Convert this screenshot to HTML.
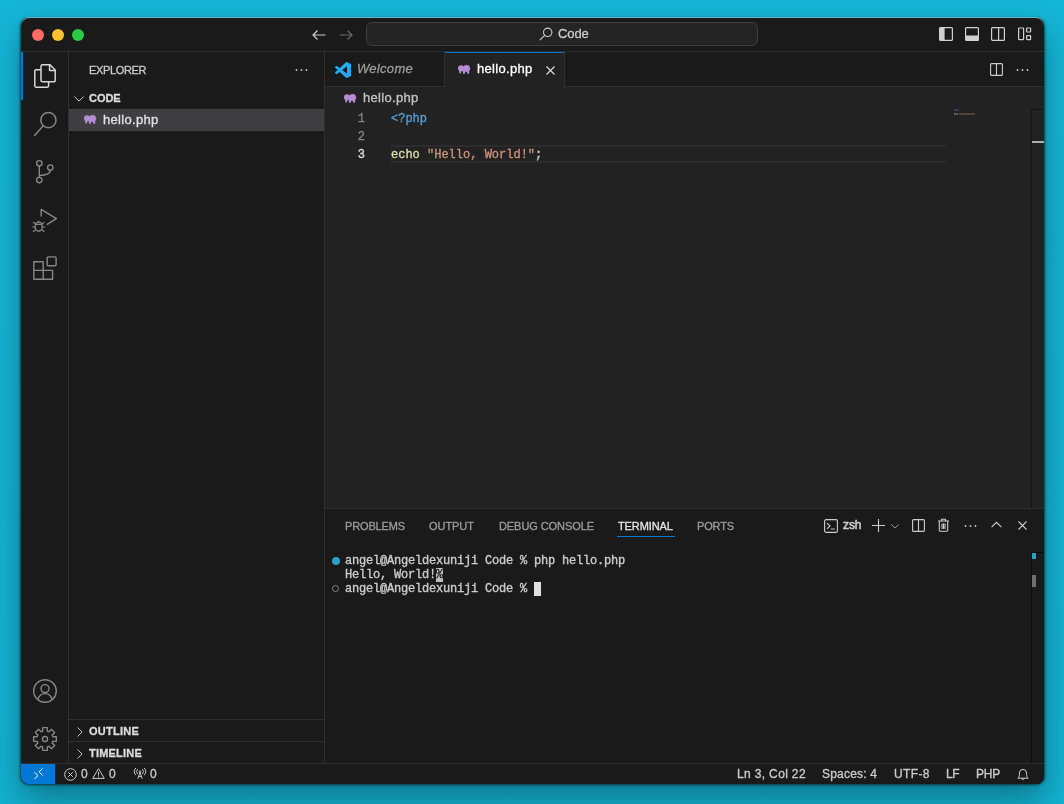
<!DOCTYPE html>
<html>
<head>
<meta charset="utf-8">
<title>hello.php — Code</title>
<style>
*{box-sizing:border-box;margin:0;padding:0}
html,body{width:1064px;height:804px;overflow:hidden}
body{font-family:"Liberation Sans",sans-serif;font-size:13px;color:#ccc;
 background:linear-gradient(180deg,#15b5d6 0%,#14b3d3 60%,#13b1d0 100%);position:relative}
.abs{position:absolute}
.t{position:absolute;white-space:pre;line-height:16px;-webkit-text-stroke:0.3px}
#win{position:absolute;left:21px;top:18px;width:1023px;height:766px;background:#1a1a1a;border-radius:8px;
 box-shadow:0 0.5px 2.5px 0.5px rgba(0,0,0,.6),0 15px 32px 0 rgba(0,0,0,.33)}
#clip{position:absolute;left:0;top:0;width:1023px;height:766px;border-radius:8px;overflow:hidden;will-change:transform}
#hl{position:absolute;left:0;top:-1px;right:0;bottom:0;border-radius:9px;box-shadow:inset 0 1px 0 rgba(255,255,255,.38);pointer-events:none}
/* title bar */
#title{position:absolute;left:0;top:0;width:1023px;height:34px;background:#1a1a1a;border-bottom:1px solid #2f2f2f}
.tl{position:absolute;top:11px;width:12px;height:12px;border-radius:50%}
#search{position:absolute;left:345px;top:4px;width:392px;height:24px;border:1px solid #3f3c3c;border-radius:6px;background:#242424}
/* activity bar */
#act{position:absolute;left:0;top:34px;width:48px;height:711px;background:#1a1a1a;border-right:1px solid #2f2f2f}
#actsel{position:absolute;left:0;top:0;width:2px;height:48px;background:#0078d4}
/* sidebar */
#side{position:absolute;left:48px;top:34px;width:256px;height:711px;background:#1a1a1a;border-right:1px solid #2f2f2f}
.sb{font-weight:bold;font-size:11px;color:#dcdcdc}
/* editor */
#ed{position:absolute;left:304px;top:34px;width:719px;height:456px;background:#222222}
#tabs{position:absolute;left:0;top:0;width:719px;height:35px;background:#1a1a1a;border-bottom:1px solid #2f2f2f}
.tab{position:absolute;top:0;height:35px;border-right:1px solid #2f2f2f}
.mono{font-family:"Liberation Mono",monospace;font-size:12px;white-space:pre;line-height:18px;-webkit-text-stroke:0.35px}
.ln{position:absolute;left:0;width:40px;text-align:right;color:#7f8287;transform:translateY(0.7px)}
.cl{position:absolute;left:66px;transform:translateY(0.6px)}
/* panel */
#panel{position:absolute;left:304px;top:490px;width:719px;height:255px;background:#1a1a1a;border-top:1px solid #2f2f2f}
.pt{font-size:11px;color:#9d9d9d;top:9px}
.term{position:absolute;left:20px;color:#ccc;letter-spacing:-0.2px;line-height:14px}
/* status */
#status{position:absolute;left:0;top:745px;width:1023px;height:21px;background:#1a1a1a;border-top:1px solid #2f2f2f;font-size:12px;color:#ccc}
#remote{position:absolute;left:0;top:0;width:34px;height:20px;background:#0078d4}
.st{top:2px;font-size:12px}
svg{position:absolute;overflow:visible}
</style>
</head>
<body>
<div id="win">
<div id="clip">
 <div id="title">
  <div class="tl" style="left:11px;background:#ff6a62"></div>
  <div class="tl" style="left:31px;background:#fdc030"></div>
  <div class="tl" style="left:51px;background:#2aca44"></div>
  <!-- nav arrows -->
  <svg style="left:291px;top:10px" width="14" height="14" viewBox="0 0 14 14" fill="none" stroke="#ccc" stroke-width="1.2"><path d="M1 7h12.500M5.500 2.500 1 7l4.500 4.500"/></svg>
  <svg style="left:318px;top:10px" width="14" height="14" viewBox="0 0 14 14" fill="none" stroke="#6a6a6a" stroke-width="1.2"><path d="M0.500 7h12.500M8.500 2.500 13 7l-4.500 4.500"/></svg>
  <div id="search">
   <svg style="left:172px;top:4px" width="14" height="14" viewBox="0 0 14 14" fill="none" stroke="#ccc" stroke-width="1.1"><circle cx="8.700" cy="5.300" r="4.200"/><path d="M5.700 8.300 0.800 13.200"/></svg>
   <span class="t" style="left:191px;top:3px;font-size:13px;color:#ccc;letter-spacing:-0.1px">Code</span>
  </div>
  <!-- layout icons -->
  <svg style="left:918px;top:9px" width="14" height="14" viewBox="0 0 14 14" fill="none" stroke="#d0d0d0" stroke-width="1.200"><rect x="0.600" y="0.600" width="12.800" height="12.800" rx="1"/><rect x="0.600" y="0.600" width="5" height="12.800" fill="#d0d0d0" stroke="none"/></svg>
  <svg style="left:944px;top:9px" width="14" height="14" viewBox="0 0 14 14" fill="none" stroke="#d0d0d0" stroke-width="1.200"><rect x="0.600" y="0.600" width="12.800" height="12.800" rx="1"/><rect x="0.600" y="8.500" width="12.800" height="5" fill="#d0d0d0" stroke="none"/></svg>
  <svg style="left:970px;top:9px" width="14" height="14" viewBox="0 0 14 14" fill="none" stroke="#d0d0d0" stroke-width="1.200"><rect x="0.600" y="0.600" width="12.800" height="12.800" rx="1"/><path d="M7.600 0.600v12.800"/></svg>
  <svg style="left:997px;top:9px" width="14" height="14" viewBox="0 0 14 14" fill="none" stroke="#d0d0d0" stroke-width="1.200"><rect x="0.600" y="1" width="5" height="11.600" rx="0.500"/><rect x="8.600" y="1" width="4" height="4" rx="0.500"/><rect x="8.600" y="8.600" width="4" height="4" rx="0.500"/></svg>
 </div>

 <div id="act">
  <div id="actsel"></div>
  <!-- files -->
  <svg style="left:13px;top:12px" width="22" height="24" viewBox="0 0 22 24" fill="none" stroke="#d7d7d7" stroke-width="1.500" stroke-linejoin="round"><path d="M7 5.700V2.200A1.400 1.400 0 0 1 8.400 0.800H16L21.200 6V16.400A1.400 1.400 0 0 1 19.800 17.800H8.400A1.400 1.400 0 0 1 7 16.400V5.700H2.200A1.400 1.400 0 0 0 0.800 7.100V21.800A1.400 1.400 0 0 0 2.200 23.200H13.200A1.400 1.400 0 0 0 14.600 21.800V17.800"/><path d="M15.600 0.800V6.400H21.200"/></svg>
  <!-- search -->
  <svg style="left:12px;top:58px" width="26" height="28" viewBox="0 0 26 28" fill="none" stroke="#868686" stroke-width="1.500"><circle cx="15.400" cy="10.200" r="7.600"/><path d="M10.200 15.800 1.600 25.400" stroke-linecap="round"/></svg>
  <!-- scm -->
  <svg style="left:12px;top:106px" width="24" height="28" viewBox="0 0 24 28" fill="none" stroke="#868686" stroke-width="1.400"><circle cx="6.300" cy="5.300" r="2.700"/><circle cx="6.300" cy="22.100" r="2.700"/><circle cx="17.300" cy="9.600" r="2.700"/><path d="M6.300 8v11.400M17.300 12.300c0 4-4 5-11 5.200"/></svg>
  <!-- debug -->
  <svg style="left:10px;top:154px" width="28" height="28" viewBox="0 0 28 28" fill="none" stroke="#868686" stroke-width="1.400" stroke-linejoin="round"><path d="M10.200 10.500V3.400l15.200 9.200-9.600 6"/><ellipse cx="7.700" cy="20.600" rx="3.600" ry="4.600"/><path d="M4.300 18.400h6.800M7.700 16v-1.200M2 16.200l2.400 1.600M13.400 16.200 11 17.800M1.200 21h2.900M11.300 21h2.900M2 25.800l2.600-2M13.400 25.800l-2.600-2" stroke-width="1.200"/></svg>
  <!-- extensions -->
  <svg style="left:12px;top:204px" width="24" height="24" viewBox="0 0 24 24" fill="none" stroke="#868686" stroke-width="1.400" stroke-linejoin="round"><path d="M0.800 5.700h9.400v17.600H0.800zM10.200 14.400h9.400v8.900h-9.400M0.800 14.400h9.400"/><rect x="14.200" y="0.900" width="8.900" height="8.900" rx="1"/></svg>
  <!-- account -->
  <svg style="left:12px;top:626px" width="24" height="26" viewBox="0 0 24 26" fill="none" stroke="#868686" stroke-width="1.400"><circle cx="12" cy="13" r="11.300"/><circle cx="12" cy="10.600" r="4"/><path d="M4.800 21.800c1-4.400 4.200-6.200 7.200-6.200s6.200 1.800 7.200 6.200"/></svg>
  <!-- gear -->
  <svg style="left:11px;top:674px" width="26" height="26" viewBox="-13 -13 26 26" fill="none" stroke="#868686" stroke-width="1.400" stroke-linejoin="round"><circle r="2.500"/><path d="M-2.38 -8.27L-2.30 -11.37L2.30 -11.37L2.38 -8.27L2.21 -7.90L4.02 -7.15L4.16 -7.52L6.41 -9.67L9.67 -6.41L7.52 -4.16L7.15 -4.02L7.90 -2.21L8.27 -2.38L11.37 -2.30L11.37 2.30L8.27 2.38L7.90 2.21L7.15 4.02L7.52 4.16L9.67 6.41L6.41 9.67L4.16 7.52L4.02 7.15L2.21 7.90L2.38 8.27L2.30 11.37L-2.30 11.37L-2.38 8.27L-2.21 7.90L-4.02 7.15L-4.16 7.52L-6.41 9.67L-9.67 6.41L-7.52 4.16L-7.15 4.02L-7.90 2.21L-8.27 2.38L-11.37 2.30L-11.37 -2.30L-8.27 -2.38L-7.90 -2.21L-7.15 -4.02L-7.52 -4.16L-9.67 -6.41L-6.41 -9.67L-4.16 -7.52L-4.02 -7.15L-2.21 -7.90Z"/></svg>
 </div>

 <div id="side">
  <span class="t" style="left:20px;top:10px;font-size:11px;color:#ccc;letter-spacing:-0.35px">EXPLORER</span>
  <svg style="left:226px;top:16px" width="13" height="4" viewBox="0 0 13 4" fill="#ccc"><circle cx="1.500" cy="2" r="0.900"/><circle cx="6.500" cy="2" r="0.900"/><circle cx="11.500" cy="2" r="0.900"/></svg>
  <svg style="left:5px;top:43.500px" width="10" height="6" viewBox="0 0 10 6" fill="none" stroke="#c5c5c5" stroke-width="1"><path d="M0.400 0.500 5 5.100 9.600 0.500"/></svg>
  <span class="t sb" style="left:20px;top:38px;letter-spacing:-0.05px">CODE</span>
  <div class="abs" style="left:0;top:57px;width:255px;height:22px;background:#3e3e43"></div>
  <svg class="php" style="left:15px;top:63px" width="13" height="10" viewBox="0 0 13 10"><g fill="#b68bd2"><circle cx="3.100" cy="3.300" r="3.100"/><circle cx="8.600" cy="3.500" r="3.400"/><rect x="4.900" y="4" width="2.100" height="4.800" rx="0.500"/><rect x="9.100" y="4" width="2.100" height="4.800" rx="0.500"/><rect x="1.300" y="4.500" width="1.700" height="4" rx="0.700" fill="#a99ad8"/><path d="M11.700 3l1.100.5-1.100.6z"/></g></svg>
  <span class="t" style="left:34px;top:60px;font-size:13px;color:#e2e2e2;letter-spacing:0.3px">hello.php</span>
  <div class="abs" style="left:0;top:667px;width:255px;height:1px;background:#2f2f2f"></div>
  <svg style="left:7.500px;top:674.500px" width="6" height="10" viewBox="0 0 6 10" fill="none" stroke="#c5c5c5" stroke-width="1"><path d="M0.600 0.500 5.100 5 0.600 9.500"/></svg>
  <span class="t sb" style="left:20px;top:671px;letter-spacing:0.25px">OUTLINE</span>
  <div class="abs" style="left:0;top:689px;width:255px;height:1px;background:#2f2f2f"></div>
  <svg style="left:7.500px;top:696.500px" width="6" height="10" viewBox="0 0 6 10" fill="none" stroke="#c5c5c5" stroke-width="1"><path d="M0.600 0.500 5.100 5 0.600 9.500"/></svg>
  <span class="t sb" style="left:20px;top:693px;letter-spacing:0.2px">TIMELINE</span>
 </div>

 <div id="ed">
  <div id="tabs">
   <div class="tab" style="left:0;width:120px">
    <svg style="left:10px;top:10px" width="16" height="16" viewBox="0 0 100 100"><path fill="#23a9f2" fill-rule="evenodd" d="M70.900 99.300c1.600.6 3.400.6 4.900-.2l20.600-9.900c2.200-1 3.500-3.200 3.500-5.600V16.400c0-2.400-1.400-4.600-3.500-5.600L75.800.9c-2.100-1-4.500-.8-6.400.6-.3.200-.5.400-.7.700L29.400 38.100 12.200 25.100c-1.600-1.200-3.800-1.100-5.300.2L1.400 30.400c-1.800 1.700-1.800 4.500 0 6.100L16.300 50 1.400 63.500c-1.800 1.700-1.800 4.500 0 6.100l5.500 5c1.500 1.400 3.700 1.500 5.300.2l17.200-13 39.400 35.900c.6.600 1.300 1.100 2.100 1.400zM75 27.300 45.100 50 75 72.700V27.300z"/></svg>
    <span class="t" style="left:32px;top:9px;font-style:italic;color:#9d9d9d;letter-spacing:0.3px">Welcome</span>
   </div>
   <div class="tab" style="left:120px;width:120px;height:36px;background:#222222;border-top:1px solid #0078d4">
    <svg class="php" style="left:13px;top:12px" width="13" height="10" viewBox="0 0 13 10"><g fill="#b68bd2"><circle cx="3.100" cy="3.300" r="3.100"/><circle cx="8.600" cy="3.500" r="3.400"/><rect x="4.900" y="4" width="2.100" height="4.800" rx="0.500"/><rect x="9.100" y="4" width="2.100" height="4.800" rx="0.500"/><rect x="1.300" y="4.500" width="1.700" height="4" rx="0.700" fill="#a99ad8"/><path d="M11.700 3l1.100.5-1.100.6z"/></g></svg>
    <span class="t" style="left:32px;top:8px;color:#fff;letter-spacing:0.3px">hello.php</span>
    <svg style="left:101px;top:13px" width="9" height="9" viewBox="0 0 9 9" fill="none" stroke="#ddd" stroke-width="1.100"><path d="M0.500 0.500l8 8M8.500 0.500l-8 8"/></svg>
   </div>
   <svg style="left:665px;top:11px" width="13" height="13" viewBox="0 0 13 13" fill="none" stroke="#ccc" stroke-width="1.100"><rect x="0.600" y="0.600" width="11.800" height="11.800" rx="1"/><path d="M6.500 0.600v11.800"/></svg>
   <svg style="left:691px;top:16px" width="13" height="4" viewBox="0 0 13 4" fill="#ccc"><circle cx="1.500" cy="2" r="0.900"/><circle cx="6.500" cy="2" r="0.900"/><circle cx="11.500" cy="2" r="0.900"/></svg>
  </div>
  <svg class="php" style="left:19px;top:42px" width="13" height="10" viewBox="0 0 13 10"><g fill="#b68bd2"><circle cx="3.100" cy="3.300" r="3.100"/><circle cx="8.600" cy="3.500" r="3.400"/><rect x="4.900" y="4" width="2.100" height="4.800" rx="0.500"/><rect x="9.100" y="4" width="2.100" height="4.800" rx="0.500"/><rect x="1.300" y="4.500" width="1.700" height="4" rx="0.700" fill="#a99ad8"/><path d="M11.700 3l1.100.5-1.100.6z"/></g></svg>
  <span class="t" style="left:38px;top:38px;font-size:13px;color:#c4c4c4;letter-spacing:0.3px">hello.php</span>
  <div class="abs" style="left:66px;top:93px;width:555px;height:18px;border:2px solid #2c2c2c;border-right:none;border-left-width:1px"></div>
  <div class="mono ln" style="top:57px">1</div>
  <div class="mono ln" style="top:75px">2</div>
  <div class="mono ln" style="top:93px;color:#ddd">3</div>
  <div class="mono cl" style="top:57px;color:#569cd6">&lt;?php</div>
  <div class="mono cl" style="top:93px"><span style="color:#dcdcaa">echo</span> <span style="color:#ce9178">"Hello, World!"</span><span style="color:#ccc">;</span></div>
  <!-- minimap -->
  <div class="abs" style="left:629px;top:57px;width:5px;height:2px;background:#35587a;opacity:.6"></div>
  <div class="abs" style="left:629px;top:61px;width:4px;height:2px;background:#85856b;opacity:.6"></div>
  <div class="abs" style="left:634px;top:61px;width:16px;height:2px;background:#6f564a;opacity:.6"></div>
  <!-- scrollbar -->
  <div class="abs" style="left:706px;top:57px;width:1px;height:399px;background:#141414"></div>
  <div class="abs" style="left:706px;top:57px;width:13px;height:1px;background:#141414"></div>
  <div class="abs" style="left:707px;top:89px;width:12px;height:2px;background:#b0b0b0"></div>
 </div>

 <div id="panel">
  <span class="t pt" style="left:20px;letter-spacing:-0.15px">PROBLEMS</span>
  <span class="t pt" style="left:104px;letter-spacing:-0.05px">OUTPUT</span>
  <span class="t pt" style="left:174px;letter-spacing:-0.08px">DEBUG CONSOLE</span>
  <span class="t pt" style="left:293px;color:#e7e7e7;letter-spacing:-0.1px">TERMINAL</span>
  <div class="abs" style="left:292px;top:27px;width:58px;height:1px;background:#0078d4"></div>
  <span class="t pt" style="left:372px;letter-spacing:-0.15px">PORTS</span>
  <!-- panel actions -->
  <svg style="left:499px;top:9.500px" width="14" height="14" viewBox="0 0 14 14" fill="none" stroke="#ccc" stroke-width="1.100"><rect x="0.600" y="0.600" width="12.800" height="12.800" rx="1.500"/><path d="M3 4.200 6 7 3 9.800M6.800 10h4"/></svg>
  <span class="t" style="left:518px;top:8px;font-size:12px;color:#ccc;-webkit-text-stroke:0.55px;letter-spacing:-0.1px">zsh</span>
  <svg style="left:547px;top:10px" width="13" height="13" viewBox="0 0 13 13" fill="none" stroke="#ccc" stroke-width="1.100"><path d="M6.500 0v13M0 6.500h13"/></svg>
  <svg style="left:566px;top:15px" width="8" height="5" viewBox="0 0 8 5" fill="none" stroke="#9d9d9d" stroke-width="1"><path d="M0.400 0.500 4 4.100 7.600 0.500"/></svg>
  <svg style="left:587px;top:10px" width="13" height="13" viewBox="0 0 13 13" fill="none" stroke="#ccc" stroke-width="1.100"><rect x="0.600" y="0.600" width="11.800" height="11.800" rx="1"/><path d="M6.500 0.600v11.800"/></svg>
  <svg style="left:613px;top:9px" width="11" height="14" viewBox="0 0 11 14" fill="none" stroke="#ccc" stroke-width="1.100"><path d="M0 3h11M3.500 3V1.200h4V3M1.300 3.200V12a1.200 1.200 0 0 0 1.200 1.200h6A1.200 1.200 0 0 0 9.700 12V3.200M4 5.500v5.500M5.500 5.500v5.500M7 5.500v5.500"/></svg>
  <svg style="left:639px;top:15px" width="13" height="4" viewBox="0 0 13 4" fill="#ccc"><circle cx="1.500" cy="2" r="0.900"/><circle cx="6.500" cy="2" r="0.900"/><circle cx="11.500" cy="2" r="0.900"/></svg>
  <svg style="left:666px;top:12px" width="11" height="7" viewBox="0 0 11 7" fill="none" stroke="#ccc" stroke-width="1.100"><path d="M0.600 6.200 5.500 1.300 10.400 6.200"/></svg>
  <svg style="left:693px;top:11.500px" width="9" height="9" viewBox="0 0 9 9" fill="none" stroke="#ccc" stroke-width="1.100"><path d="M0.500 0.500l8 8M8.500 0.500l-8 8"/></svg>
  <!-- terminal -->
  <div class="abs" style="left:6.500px;top:47.500px;width:8px;height:8px;border-radius:50%;background:#2a9fc9"></div>
  <div class="abs" style="left:7px;top:75.500px;width:7px;height:7px;border-radius:50%;border:1.200px solid #858585"></div>
  <div class="mono term" style="top:45px">angel@Angeldexuniji Code % php hello.php</div>
  <div class="mono term" style="top:59px">Hello, World!<span style="background:#bdbdbd;color:#1a1a1a">%</span></div>
  <div class="mono term" style="top:73px">angel@Angeldexuniji Code % </div>
  <div class="abs" style="left:209px;top:72.500px;width:7px;height:14px;background:#e0e0e0"></div>
  <!-- terminal scrollbar -->
  <div class="abs" style="left:706px;top:43px;width:1px;height:212px;background:#0c0c0c"></div>
  <div class="abs" style="left:706px;top:43px;width:13px;height:1px;background:#0c0c0c"></div>
  <div class="abs" style="left:707px;top:44px;width:4px;height:6px;background:#2a9fc9"></div>
  <div class="abs" style="left:707px;top:66px;width:4px;height:12px;background:#6e6e6e"></div>
 </div>

 <div id="status">
  <div id="remote">
   <svg style="left:13px;top:4px" width="9" height="11" viewBox="0 0 9 11" fill="none" stroke="#fff" stroke-width="1"><path d="M0.400 4.200 4 7.600 0.400 11M8.600 0.400 5 3.800 8.600 7.200"/></svg>
  </div>
  <svg style="left:43px;top:3.500px" width="13" height="13" viewBox="0 0 13 13" fill="none" stroke="#ccc" stroke-width="1"><circle cx="6.500" cy="6.500" r="5.800"/><path d="M4.200 4.200l4.600 4.600M8.800 4.200 4.200 8.800"/></svg>
  <span class="t st" style="left:60px">0</span>
  <svg style="left:71px;top:4px" width="13" height="11" viewBox="0 0 13 11" fill="none" stroke="#ccc" stroke-width="1" stroke-linejoin="round"><path d="M6.500 0.700 12.300 10.400H0.700zM6.500 4v3.600M6.500 8.400v1"/></svg>
  <span class="t st" style="left:88px">0</span>
  <svg style="left:113px;top:4px" width="12" height="11" viewBox="0 0 12 11" fill="none" stroke="#ccc" stroke-width="1"><path d="M3.800 10.800 6 4.200l2.200 6.600M4.600 8.400h2.800"/><circle cx="6" cy="3.600" r="0.800"/><path d="M3.600 1.200a3.400 3.400 0 0 0 0 4.800M8.400 1.200a3.400 3.400 0 0 1 0 4.800M1.800 0a5.400 5.400 0 0 0 0 7.200M10.200 0a5.400 5.400 0 0 1 0 7.200"/></svg>
  <span class="t st" style="left:129px">0</span>
  <span class="t st" style="left:716px;letter-spacing:0.35px">Ln 3, Col 22</span>
  <span class="t st" style="left:801px;letter-spacing:0.2px">Spaces: 4</span>
  <span class="t st" style="left:873px;letter-spacing:0.35px">UTF-8</span>
  <span class="t st" style="left:925px;letter-spacing:-0.5px">LF</span>
  <span class="t st" style="left:955px;letter-spacing:-0.2px">PHP</span>
  <svg style="left:996px;top:4px" width="12" height="13" viewBox="0 0 12 13" fill="none" stroke="#ccc" stroke-width="1" stroke-linejoin="round"><path d="M0.800 10.200c1.200-.8 1.600-2 1.600-3.600V5a3.600 3.600 0 0 1 7.200 0v1.600c0 1.600.4 2.800 1.600 3.600zM4.600 10.400a1.500 1.500 0 0 0 2.800 0"/></svg>
 </div>
</div>
<div id="hl"></div>
</div>
</body>
</html>
